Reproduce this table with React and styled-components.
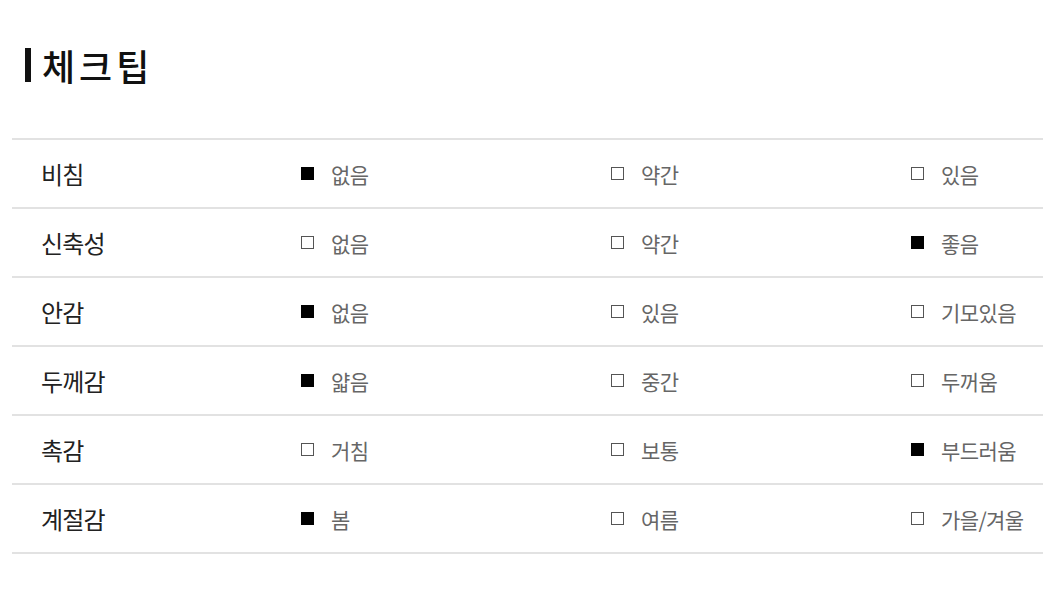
import React from "react";
import styled, { createGlobalStyle } from "styled-components";

const Global = createGlobalStyle`
  html, body { margin: 0; padding: 0; background: #fff; }
  body { font-family: "Noto Sans CJK KR", "Noto Sans", sans-serif; color: #111; }
`;

const Page = styled.div`
  width: 1043px;
  padding-top: 40px;
  box-sizing: border-box;
`;

const Title = styled.h2`
  display: flex;
  align-items: center;
  gap: 11px;
  margin: 0 0 0 25px;
  height: 50px;
  font-size: 36px;
  font-weight: 500;
  letter-spacing: 4px;
  color: #111;
  &::before {
    content: "";
    width: 6px;
    height: 34px;
    background: #111;
  }
`;

const Table = styled.div`
  margin: 48px 0 0 12px;
  border-top: 2px solid #e2e2e2;
`;

const Row = styled.div`
  display: grid;
  grid-template-columns: 288px 310px 300px 1fr;
  align-items: center;
  height: 67px;
  border-bottom: 2px solid #e2e2e2;
`;

const Label = styled.div`
  padding-left: 29px;
  font-size: 24px;
  font-weight: 400;
  color: #222;
  letter-spacing: -0.8px;
`;

const Option = styled.div`
  display: flex;
  align-items: center;
  gap: 17px;
  font-size: 21px;
  color: #666;
  letter-spacing: -0.6px;
`;

const Box = styled.span`
  width: ${p => (p.$on ? "13px" : "13px")};
  height: 13px;
  box-sizing: border-box;
  flex: none;
  margin-left: 1px;
  background: ${p => (p.$on ? "#000" : "#fff")};
  border: ${p => (p.$on ? "none" : "1.5px solid #555")};
`;

const data = [
  ["비침", ["없음", "약간", "있음"], 0],
  ["신축성", ["없음", "약간", "좋음"], 2],
  ["안감", ["없음", "있음", "기모있음"], 0],
  ["두께감", ["얇음", "중간", "두꺼움"], 0],
  ["촉감", ["거침", "보통", "부드러움"], 2],
  ["계절감", ["봄", "여름", "가을/겨울"], 0],
];

export default function App() {
  return (
    <Page>
      <Global />
      <Title>체크팁</Title>
      <Table>
        {data.map(([label, opts, sel]) => (
          <Row key={label}>
            <Label>{label}</Label>
            {opts.map((o, i) => (
              <Option key={o}>
                <Box $on={i === sel} />
                {o}
              </Option>
            ))}
          </Row>
        ))}
      </Table>
    </Page>
  );
}
